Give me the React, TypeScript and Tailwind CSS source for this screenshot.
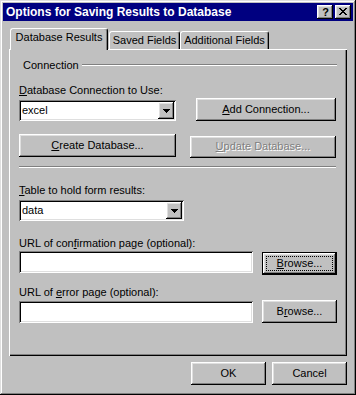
import React from "react";

const raised =
  "bg-[#c0c0c0] shadow-[inset_-1px_-1px_#000,inset_1px_1px_#fff,inset_-2px_-2px_#808080,inset_2px_2px_#dfdfdf]";
const sunken =
  "bg-white shadow-[inset_1px_1px_#808080,inset_-1px_-1px_#fff,inset_2px_2px_#000,inset_-2px_-2px_#dfdfdf]";
const focused =
  "bg-[#c0c0c0] shadow-[inset_0_0_0_1px_#000,inset_-2px_-2px_#000,inset_2px_2px_#fff,inset_-3px_-3px_#808080,inset_3px_3px_#dfdfdf]";

function Arrow() {
  return (
    <svg width="7" height="4" viewBox="0 0 7 4" shapeRendering="crispEdges">
      <path d="M0 0h7v1H0z M1 1h5v1H1z M2 2h3v1H2z M3 3h1v1H3z" fill="#000" />
    </svg>
  );
}

function Combo({ value, w }: { value: string; w: string }) {
  return (
    <div className={`relative h-[21px] ${w} ${sunken} flex items-center pl-[3px]`}>
      <span>{value}</span>
      <div className={`absolute right-[2px] top-[2px] w-[16px] h-[17px] ${raised} flex items-center justify-center`}>
        <Arrow />
      </div>
    </div>
  );
}

function Btn({
  children,
  cls,
}: {
  children: React.ReactNode;
  cls: string;
}) {
  return (
    <div className={`${raised} ${cls} flex items-center justify-center pb-[1px]`}>{children}</div>
  );
}

export default function App() {
  return (
    <div className="w-[356px] h-[395px] bg-[#c0c0c0] p-[3px] flex flex-col font-['Liberation_Sans',Arial,sans-serif] text-[11px] leading-[13px] text-black shadow-[inset_-1px_-1px_#000,inset_1px_1px_#dfdfdf,inset_-2px_-2px_#808080,inset_2px_2px_#fff]">
      {/* Title bar */}
      <div className="h-[18px] bg-[#000080] flex items-center pl-[3px] pr-[2px]">
        <span className="flex-1 text-white font-bold text-[12px] leading-[14px] whitespace-nowrap">
          Options for Saving Results to Database
        </span>
        <div className={`w-[16px] h-[14px] ${raised} flex items-center justify-center`}>
          <span className="font-bold text-[11px] leading-[11px] pl-[1px]">?</span>
        </div>
        <div className={`ml-[2px] w-[16px] h-[14px] ${raised} flex items-center justify-center pb-[1px]`}>
          <svg width="8" height="7" viewBox="0 0 8 7" shapeRendering="crispEdges">
            <path
              d="M0 0h2v1H0z M6 0h2v1H6z M1 1h2v1H1z M5 1h2v1H5z M2 2h4v1H2z M3 3h2v1H3z M2 4h4v1H2z M1 5h2v1H1z M5 5h2v1H5z M0 6h2v1H0z M6 6h2v1H6z"
              fill="#000"
            />
          </svg>
        </div>
      </div>

      {/* Tabs + panel */}
      <div className="mt-[7px] ml-[6px] w-[338px] flex flex-col">
        <div className="flex items-end h-[21px] pl-[1px]">
          <div className="relative z-10 h-[22px] -mb-[1px] w-[98px] bg-[#c0c0c0] border-t border-l border-r border-t-white border-l-white border-r-black rounded-t-[3px] shadow-[inset_-1px_0_#808080] flex justify-center pt-[2px] whitespace-nowrap">
            Database Results
          </div>
          <div className="ml-[1px] h-[18px] w-[71px] bg-[#c0c0c0] border-t border-l border-r border-t-white border-l-white border-r-black rounded-t-[3px] shadow-[inset_-1px_0_#808080] flex justify-center pt-[2px] whitespace-nowrap">
            Saved Fields
          </div>
          <div className="h-[18px] w-[89px] bg-[#c0c0c0] border-t border-l border-r border-t-white border-l-white border-r-black rounded-t-[3px] shadow-[inset_-1px_0_#808080] flex justify-center pt-[2px] whitespace-nowrap">
            Additional Fields
          </div>
        </div>

        <div className="h-[307px] bg-[#c0c0c0] shadow-[inset_1px_1px_#fff,inset_-1px_-1px_#000,inset_-2px_-2px_#808080] pl-[10px] pr-[10px] pt-[10px] flex flex-col">
          {/* Connection group header */}
          <div className="flex items-start h-[13px]">
            <span className="ml-[4px]">Connection</span>
            <div className="flex-1 ml-[3px] mt-[5px] border-t border-t-[#808080] border-b border-b-white" />
          </div>

          <div className="mt-[12px] h-[13px]">
            <u>D</u>atabase Connection to Use:
          </div>

          <div className="mt-[1px] flex items-end h-[23px]">
            <Combo value="excel" w="w-[157px]" />
            <Btn cls="ml-[20px] w-[140px] h-[23px]">
              <span>
                <u>A</u>dd Connection...
              </span>
            </Btn>
          </div>

          <div className="mt-[13px] flex items-start">
            <Btn cls="w-[157px] h-[23px]">
              <span>
                <u>C</u>reate Database...
              </span>
            </Btn>
            <Btn cls="ml-[14px] mt-[2px] w-[146px] h-[22px]">
              <span className="text-[#808080] [text-shadow:1px_1px_0_#fff]">
                <u>U</u>pdate Database...
              </span>
            </Btn>
          </div>

          <div className="mt-[8px] w-[317px] border-t border-t-[#808080] border-b border-b-white" />

          <div className="mt-[16px] h-[13px]">
            <u>T</u>able to hold form results:
          </div>
          <div className="mt-[3px]">
            <Combo value="data" w="w-[165px]" />
          </div>

          <div className="mt-[16px] h-[13px]">
            URL of con<u>f</u>irmation page (optional):
          </div>
          <div className="mt-[1px] flex items-start">
            <div className={`w-[234px] h-[22px] ${sunken}`} />
            <div className={`ml-[9px] mt-[1px] w-[75px] h-[23px] ${focused} p-[4px] flex`}>
              <div className="flex-1 border border-dotted border-black flex items-center justify-center">
                <span>
                  <u>B</u>rowse...
                </span>
              </div>
            </div>
          </div>

          <div className="mt-[11px] h-[13px]">
            URL of <u>e</u>rror page (optional):
          </div>
          <div className="mt-[1px] flex items-start">
            <div className={`mt-[1px] w-[234px] h-[22px] ${sunken}`} />
            <Btn cls="ml-[9px] w-[75px] h-[23px]">
              <span>
                B<u>r</u>owse...
              </span>
            </Btn>
          </div>
        </div>
      </div>

      {/* Bottom buttons */}
      <div className="mt-[6px] ml-[6px] w-[338px] flex justify-end gap-[6px]">
        <Btn cls="w-[75px] h-[23px]">OK</Btn>
        <Btn cls="w-[75px] h-[23px]">Cancel</Btn>
      </div>
    </div>
  );
}
